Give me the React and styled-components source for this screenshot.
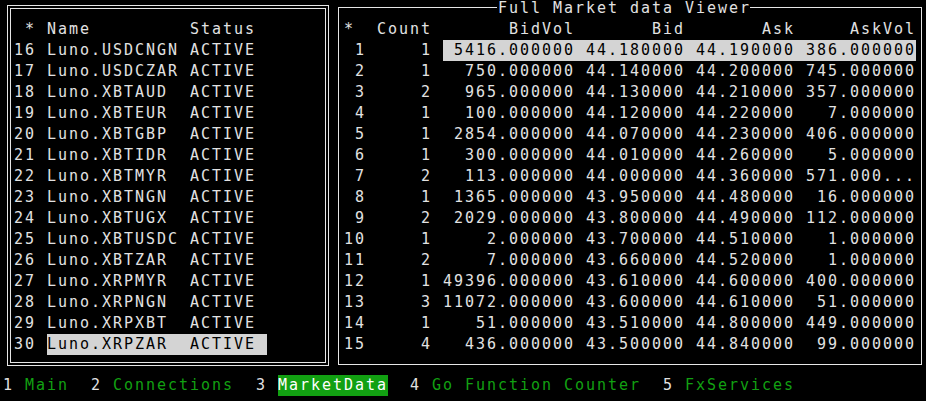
import styled, { createGlobalStyle } from "styled-components";

const COL = 11;
const ROW = 21;
const FG = "#e2e2e2";
const LINE = "#e6e6e6";
const GREEN = "#12a012";

const markets = [
  ["16", "Luno.USDCNGN"],
  ["17", "Luno.USDCZAR"],
  ["18", "Luno.XBTAUD"],
  ["19", "Luno.XBTEUR"],
  ["20", "Luno.XBTGBP"],
  ["21", "Luno.XBTIDR"],
  ["22", "Luno.XBTMYR"],
  ["23", "Luno.XBTNGN"],
  ["24", "Luno.XBTUGX"],
  ["25", "Luno.XBTUSDC"],
  ["26", "Luno.XBTZAR"],
  ["27", "Luno.XRPMYR"],
  ["28", "Luno.XRPNGN"],
  ["29", "Luno.XRPXBT"],
  ["30", "Luno.XRPZAR"],
];

const depth = [
  ["1", "1", "5416.000000", "44.180000", "44.190000", "386.000000"],
  ["2", "1", "750.000000", "44.140000", "44.200000", "745.000000"],
  ["3", "2", "965.000000", "44.130000", "44.210000", "357.000000"],
  ["4", "1", "100.000000", "44.120000", "44.220000", "7.000000"],
  ["5", "1", "2854.000000", "44.070000", "44.230000", "406.000000"],
  ["6", "1", "300.000000", "44.010000", "44.260000", "5.000000"],
  ["7", "2", "113.000000", "44.000000", "44.360000", "571.000..."],
  ["8", "1", "1365.000000", "43.950000", "44.480000", "16.000000"],
  ["9", "2", "2029.000000", "43.800000", "44.490000", "112.000000"],
  ["10", "1", "2.000000", "43.700000", "44.510000", "1.000000"],
  ["11", "2", "7.000000", "43.660000", "44.520000", "1.000000"],
  ["12", "1", "49396.000000", "43.610000", "44.600000", "400.000000"],
  ["13", "3", "11072.000000", "43.600000", "44.610000", "51.000000"],
  ["14", "1", "51.000000", "43.510000", "44.800000", "449.000000"],
  ["15", "4", "436.000000", "43.500000", "44.840000", "99.000000"],
];

const tabs = [
  ["1", "Main"],
  ["2", "Connections"],
  ["3", "MarketData"],
  ["4", "Go Function Counter"],
  ["5", "FxServices"],
];

export default function App() {
  return (
    <Screen>
      <GlobalStyle />
      <Main>
        <DoubleFrame>
          <FrameInner>
            <Row>
              <Cell $w={2} $align="right">*</Cell>
              <Selected $gap>
                <Cell $w={13}>Name</Cell>
                <Cell $w={7}>Status</Cell>
              </Selected>
            </Row>
            {markets.map(([id, name]) => (
              <Row key={id}>
                <Cell $w={2} $align="right">{id}</Cell>
                <Selected $gap $on={id === "30"}>
                  <Cell $w={13}>{name}</Cell>
                  <Cell $w={7}>ACTIVE</Cell>
                </Selected>
              </Row>
            ))}
          </FrameInner>
        </DoubleFrame>

        <SingleFrame>
          <Title>Full Market data Viewer</Title>
          <Row>
            <Cell $w={2}>*</Cell>
            <Cell $w={6} $align="right">Count</Cell>
            <Selected $gap>
              <Cell $w={12} $align="right">BidVol</Cell>
              <Cell $w={10} $align="right">Bid</Cell>
              <Cell $w={10} $align="right">Ask</Cell>
              <Cell $w={11} $align="right">AskVol</Cell>
            </Selected>
          </Row>
          {depth.map(([n, count, bidVol, bid, ask, askVol]) => (
            <Row key={n}>
              <Cell $w={2} $align="right">{n}</Cell>
              <Cell $w={6} $align="right">{count}</Cell>
              <Selected $gap $on={n === "1"}>
                <Cell $w={12} $align="right">{bidVol}</Cell>
                <Cell $w={10} $align="right">{bid}</Cell>
                <Cell $w={10} $align="right">{ask}</Cell>
                <Cell $w={11} $align="right">{askVol}</Cell>
              </Selected>
            </Row>
          ))}
        </SingleFrame>
      </Main>

      <StatusBar>
        {tabs.map(([key, label], i) => (
          <TabItem key={key}>
            {i > 0 ? "  " : ""}
            {key}{" "}
            <TabLabel $active={label === "MarketData"}>{label}</TabLabel>
          </TabItem>
        ))}
      </StatusBar>
    </Screen>
  );
}

const GlobalStyle = createGlobalStyle`
  html, body {
    margin: 0;
    padding: 0;
    background: #000;
  }
  body {
    overflow: hidden;
  }
`;

const Screen = styled.div`
  width: 926px;
  height: 401px;
  overflow: hidden;
  background: #000;
  color: ${FG};
  font-family: "DejaVu Sans Mono", monospace;
  font-size: 15px;
  letter-spacing: ${COL - 15 * 0.60205}px;
  line-height: ${ROW}px;
  white-space: pre;
  display: flex;
  flex-direction: column;
`;

const Main = styled.div`
  display: flex;
  height: 375px;
  flex: none;
`;

const DoubleFrame = styled.div`
  box-sizing: border-box;
  margin: 5px 0 0 7px;
  width: 322px;
  height: 361px;
  border: 1px solid ${LINE};
  padding: 2px;
`;

const FrameInner = styled.div`
  box-sizing: border-box;
  height: 100%;
  border: 1px solid ${LINE};
  padding: 10px 0 0 3px;
`;

const SingleFrame = styled.div`
  position: relative;
  box-sizing: border-box;
  margin: 7px 0 0 9px;
  width: 584px;
  height: 358px;
  border: 1px solid ${LINE};
  padding: 11px 0 0 5px;
`;

const Title = styled.div`
  position: absolute;
  top: -10px;
  left: 158px;
  width: 253px;
  height: ${ROW}px;
  padding-left: 1px;
  box-sizing: border-box;
  background: #000;
`;

const Row = styled.div`
  display: flex;
  height: ${ROW}px;
`;

const Cell = styled.span`
  display: block;
  flex: none;
  width: ${(p) => p.$w * COL}px;
  text-align: ${(p) => p.$align || "left"};
  overflow: hidden;
`;

const Selected = styled.div`
  display: flex;
  margin-left: ${(p) => (p.$gap ? COL : 0)}px;
  background: ${(p) => (p.$on ? "#d4d4d4" : "transparent")};
  color: ${(p) => (p.$on ? "#000" : "inherit")};
`;

const StatusBar = styled.div`
  display: flex;
  height: ${ROW}px;
  padding-left: 3px;
`;

const TabItem = styled.span`
  display: block;
  color: ${FG};
`;

const TabLabel = styled.span`
  display: inline-block;
  height: ${ROW}px;
  color: ${(p) => (p.$active ? "#ffffff" : GREEN)};
  background: ${(p) => (p.$active ? GREEN : "transparent")};
`;
